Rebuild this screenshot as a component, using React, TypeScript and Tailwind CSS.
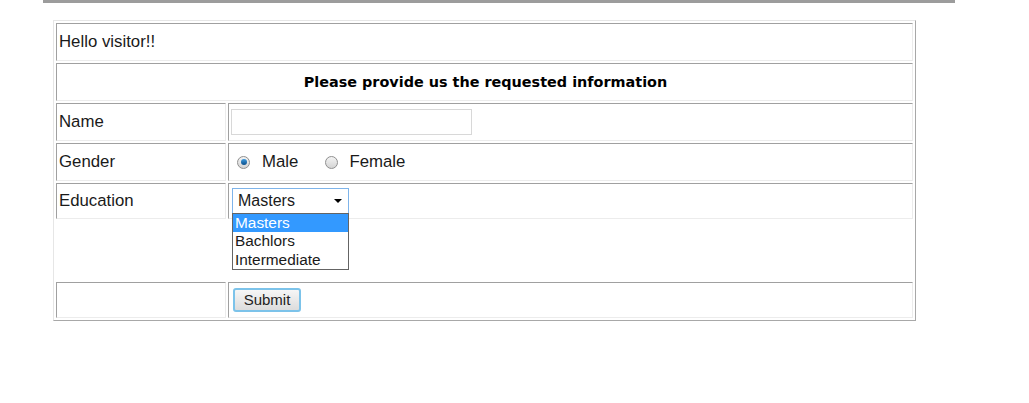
import React from 'react';

const cell = 'border border-t-[#a0a0a0] border-l-[#a0a0a0] border-r-[#ececec] border-b-[#ececec] align-middle p-0 pl-[2px]';

const Radio: React.FC<{ checked?: boolean }> = ({ checked }) => (
    <span className="inline-flex w-[13px] h-[13px] rounded-full border border-[#8f8f8f] bg-gradient-to-b from-[#f4f4f4] to-[#d4d4d4] items-center justify-center">
        {checked && <span className="w-[6px] h-[6px] rounded-full bg-gradient-to-b from-[#3c9be0] to-[#0b4f8a]" />}
    </span>
);

export default function App() {
    return (
        <div className="w-[1029px] h-[403px] bg-white text-[#1a1a1a] font-['Liberation_Sans',Arial,sans-serif] text-[16.8px] relative">
            <div className="ml-[43px] w-[912px] h-[3px] bg-[#9c9c9c]" />
            <table className="ml-[53px] mt-[17px] w-[863px] border-separate border-spacing-[2px] border border-t-[#e6e6e6] border-l-[#e6e6e6] border-r-[#a8a8a8] border-b-[#a8a8a8]">
                <tbody>
                    <tr className="h-[38px]">
                        <td colSpan={2} className={cell}>Hello visitor!!</td>
                    </tr>
                    <tr className="h-[38px]">
                        <td colSpan={2} className={`${cell} pt-[2px] text-center font-['DejaVu_Sans',Verdana,sans-serif] font-bold text-[14.4px] text-black`}>
                            Please provide us the requested information
                        </td>
                    </tr>
                    <tr className="h-[38px]">
                        <td className={`${cell} w-[170px]`}>Name</td>
                        <td className={cell}>
                            <div className="w-[241px] h-[26px] border border-[#d8d8d8] bg-white" />
                        </td>
                    </tr>
                    <tr className="h-[38px]">
                        <td className={cell}>Gender</td>
                        <td className={cell}>
                            <div className="flex items-center pl-[6px]">
                                <Radio checked />
                                <span className="ml-[12px]">Male</span>
                                <span className="ml-[27px] flex"><Radio /></span>
                                <span className="ml-[11px]">Female</span>
                            </div>
                        </td>
                    </tr>
                    <tr className="h-[36px]">
                        <td className={cell}>Education</td>
                        <td className={`${cell} relative`}>
                            <div className="ml-[1px] w-[117px] h-[26px] border border-[#7eb4ea] bg-white flex items-center justify-between pl-[5px] pr-[6px] text-[16px]">
                                <span>Masters</span>
                                <svg width="8" height="4" viewBox="0 0 8 4"><path d="M0 0h8L4 4z" fill="#000" /></svg>
                            </div>
                            <div className="absolute left-[3px] top-[29px] w-[117px] border border-[#646464] bg-white text-[15.4px] leading-[18px] z-10">
                                <div className="bg-[#3399ff] text-white pl-[2px] h-[18px]">Masters</div>
                                <div className="pl-[2px] h-[19px]">Bachlors</div>
                                <div className="pl-[2px] h-[18px]">Intermediate</div>
                            </div>
                        </td>
                    </tr>
                    <tr className="h-[59px]">
                        <td className="p-0"></td>
                        <td className="p-0"></td>
                    </tr>
                    <tr className="h-[36px]">
                        <td className={cell}></td>
                        <td className={cell}>
                            <button className="ml-[2px] w-[68px] h-[24px] rounded-[3px] border-2 border-[#7cc3ea] bg-gradient-to-b from-[#f6f6f6] to-[#dcdcdc] text-[15px] leading-none text-[#222]">
                                Submit
                            </button>
                        </td>
                    </tr>
                </tbody>
            </table>
        </div>
    );
}
